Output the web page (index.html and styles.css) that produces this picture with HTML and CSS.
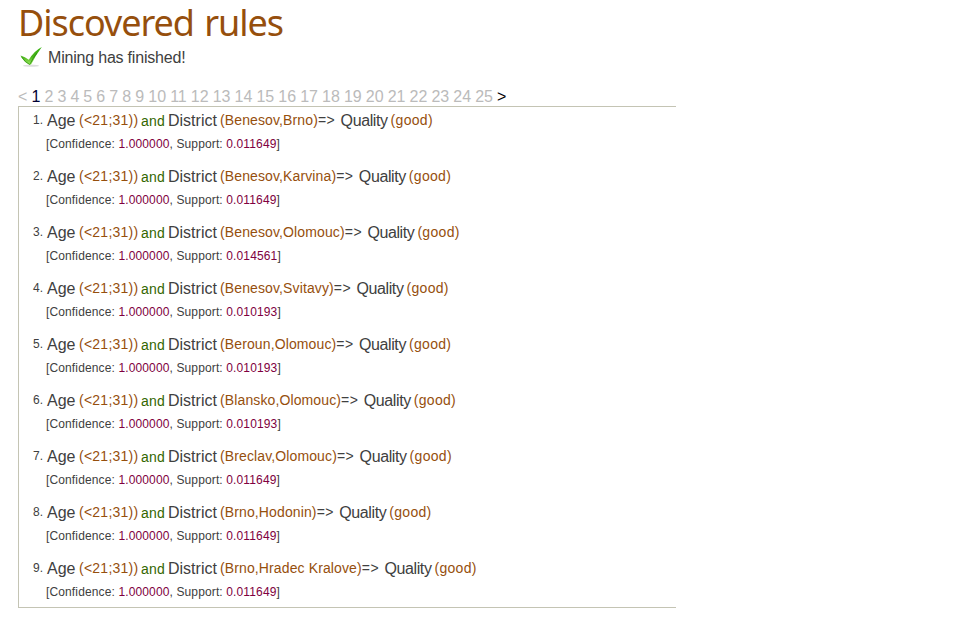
FILE: index.html
```html
<!DOCTYPE html>
<html lang="en">
<head>
<meta charset="utf-8">
<title>Discovered rules</title>
<link rel="stylesheet" href="styles.css">
</head>
<body>
<main>
<h1>Discovered rules</h1>
<p class="status"><svg width="24" height="22" viewBox="0 0 24 22" aria-hidden="true"><defs><linearGradient id="g" x1="0" y1="0" x2="0" y2="1"><stop offset="0" stop-color="#35b010"/><stop offset=".55" stop-color="#4ab51a"/><stop offset="1" stop-color="#a0ea62"/></linearGradient></defs><ellipse cx="11" cy="19.7" rx="8" ry="1.1" fill="#dedede"/><path d="M.5 9.5Q5 11 8.8 13.8Q14 5 21.8 1Q15.5 9.5 11.4 18Q10.2 19.2 8.8 18.4Q3.5 15.5 .5 9.5Z" fill="url(#g)"/><path d="M1.5 10.8Q5 16.5 9.8 18.5Q13 12 16.8 7" fill="none" stroke="#238b0b" stroke-width=".7"/></svg><span>Mining has finished!</span></p>
<nav class="pages"><span>&lt;</span><b>1</b><span>2</span><span>3</span><span>4</span><span>5</span><span>6</span><span>7</span><span>8</span><span>9</span><span>10</span><span>11</span><span>12</span><span>13</span><span>14</span><span>15</span><span>16</span><span>17</span><span>18</span><span>19</span><span>20</span><span>21</span><span>22</span><span>23</span><span>24</span><span>25</span><a>&gt;</a></nav>
<ol class="rules">
<li><div class="rule"><span class="num">1.</span><span class="attr age">Age</span><span class="val range">(&lt;21;31))</span><span class="and">and</span><span class="attr district">District</span><span class="val">(Benesov,Brno)</span><span class="imp">=&gt;</span><span class="attr quality">Quality</span><span class="val">(good)</span></div><div class="stats">[Confidence: <em>1.000000</em>, Support: <em>0.011649</em>]</div></li>
<li><div class="rule"><span class="num">2.</span><span class="attr age">Age</span><span class="val range">(&lt;21;31))</span><span class="and">and</span><span class="attr district">District</span><span class="val">(Benesov,Karvina)</span><span class="imp">=&gt;</span><span class="attr quality">Quality</span><span class="val">(good)</span></div><div class="stats">[Confidence: <em>1.000000</em>, Support: <em>0.011649</em>]</div></li>
<li><div class="rule"><span class="num">3.</span><span class="attr age">Age</span><span class="val range">(&lt;21;31))</span><span class="and">and</span><span class="attr district">District</span><span class="val">(Benesov,Olomouc)</span><span class="imp">=&gt;</span><span class="attr quality">Quality</span><span class="val">(good)</span></div><div class="stats">[Confidence: <em>1.000000</em>, Support: <em>0.014561</em>]</div></li>
<li><div class="rule"><span class="num">4.</span><span class="attr age">Age</span><span class="val range">(&lt;21;31))</span><span class="and">and</span><span class="attr district">District</span><span class="val">(Benesov,Svitavy)</span><span class="imp">=&gt;</span><span class="attr quality">Quality</span><span class="val">(good)</span></div><div class="stats">[Confidence: <em>1.000000</em>, Support: <em>0.010193</em>]</div></li>
<li><div class="rule"><span class="num">5.</span><span class="attr age">Age</span><span class="val range">(&lt;21;31))</span><span class="and">and</span><span class="attr district">District</span><span class="val">(Beroun,Olomouc)</span><span class="imp">=&gt;</span><span class="attr quality">Quality</span><span class="val">(good)</span></div><div class="stats">[Confidence: <em>1.000000</em>, Support: <em>0.010193</em>]</div></li>
<li><div class="rule"><span class="num">6.</span><span class="attr age">Age</span><span class="val range">(&lt;21;31))</span><span class="and">and</span><span class="attr district">District</span><span class="val">(Blansko,Olomouc)</span><span class="imp">=&gt;</span><span class="attr quality">Quality</span><span class="val">(good)</span></div><div class="stats">[Confidence: <em>1.000000</em>, Support: <em>0.010193</em>]</div></li>
<li><div class="rule"><span class="num">7.</span><span class="attr age">Age</span><span class="val range">(&lt;21;31))</span><span class="and">and</span><span class="attr district">District</span><span class="val">(Breclav,Olomouc)</span><span class="imp">=&gt;</span><span class="attr quality">Quality</span><span class="val">(good)</span></div><div class="stats">[Confidence: <em>1.000000</em>, Support: <em>0.011649</em>]</div></li>
<li><div class="rule"><span class="num">8.</span><span class="attr age">Age</span><span class="val range">(&lt;21;31))</span><span class="and">and</span><span class="attr district">District</span><span class="val">(Brno,Hodonin)</span><span class="imp">=&gt;</span><span class="attr quality">Quality</span><span class="val">(good)</span></div><div class="stats">[Confidence: <em>1.000000</em>, Support: <em>0.011649</em>]</div></li>
<li><div class="rule"><span class="num">9.</span><span class="attr age">Age</span><span class="val range">(&lt;21;31))</span><span class="and">and</span><span class="attr district">District</span><span class="val">(Brno,Hradec Kralove)</span><span class="imp">=&gt;</span><span class="attr quality">Quality</span><span class="val">(good)</span></div><div class="stats">[Confidence: <em>1.000000</em>, Support: <em>0.011649</em>]</div></li>
</ol>
</main>
</body>
</html>
```
FILE: styles.css
```css
body { margin: 0; background: #fff; color: #404040; font-family: "Liberation Sans", Arial, sans-serif; }
main { width: 658px; padding-left: 18px; }
h1 { margin: 0; height: 46px; font: 400 36px/45px "Noto Sans", "Open Sans", sans-serif; letter-spacing: -1.05px; word-spacing: 2px; color: #964f0d; white-space: nowrap; }
.status { display: flex; align-items: center; margin: 0; height: 22px; font-size: 16px; line-height: 22px; letter-spacing: -.2px; }
.status svg { margin: 0 4px 0 2px; }
.status span { padding-top: 2px; }
.pages { display: flex; gap: 4.08px; margin-top: 18px; height: 20px; line-height: 21px; font-size: 16px; color: #bbb; white-space: nowrap; }
.pages b { font-weight: 400; color: #000033; }
.pages a { color: #000; }
.rules { list-style: none; margin: 0; padding: 0; box-sizing: border-box; height: 502px; border: solid #c4c4b4; border-width: 1px 0 1px 1px; }
.rules li { height: 56px; padding-left: 14px; }
.rule { display: flex; align-items: flex-start; height: 27px; white-space: nowrap; }
.num { width: 14px; font-size: 12px; line-height: 27px; letter-spacing: .2px; }
.attr { font-size: 16px; line-height: 27px; }
.age { width: 32px; }
.val { font-size: 14px; line-height: 26px; color: #964f0d; letter-spacing: .12px; }
.range { width: 62px; letter-spacing: .25px; }
.and { width: 27px; font-size: 14px; line-height: 28px; color: #336600; letter-spacing: .2px; }
.district { width: 52px; }
.imp { width: 22.7px; font-size: 14px; line-height: 26px; letter-spacing: .5px; }
.quality { width: 50px; letter-spacing: -.4px; }
.quality + .val { letter-spacing: .3px; }
.stats { padding-left: 13px; font-size: 12px; line-height: 20px; letter-spacing: .13px; white-space: nowrap; }
.stats em { font-style: normal; color: #800040; }
```
